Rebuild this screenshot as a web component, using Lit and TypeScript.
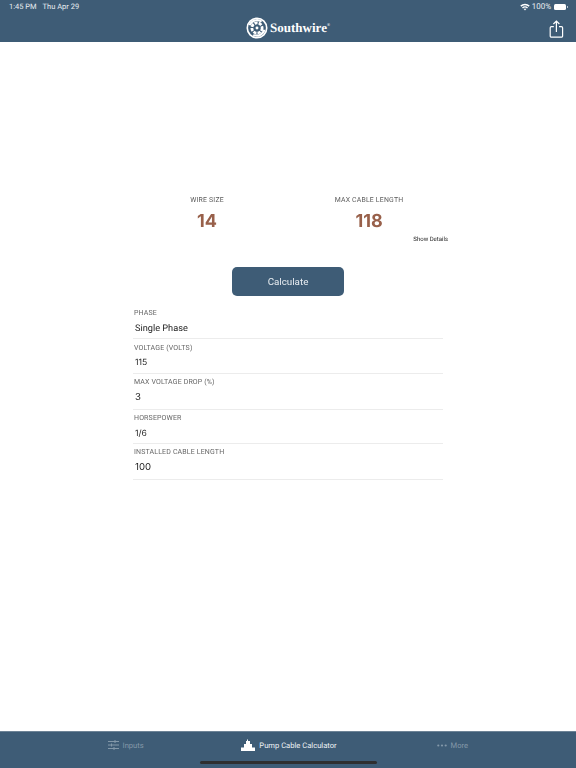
import { LitElement, html, css, svg } from "lit";
import { customElement } from "lit/decorators.js";
import { classMap } from "lit/directives/class-map.js";

const FIELDS = [
  { label: "PHASE", value: "Single Phase", h: 35, top: 4, gap: 4, kind: "text" },
  { label: "VOLTAGE (VOLTS)", value: "115", h: 35, top: 4, gap: 3, kind: "small" },
  { label: "MAX VOLTAGE DROP (%)", value: "3", h: 36, top: 3, gap: 4, kind: "big" },
  { label: "HORSEPOWER", value: "1/6", h: 34, top: 3, gap: 4, kind: "small" },
  { label: "INSTALLED CABLE LENGTH", value: "100", h: 36, top: 3, gap: 4, kind: "big" },
];

const logoMark = svg`<svg class="mark" width="22" height="22" viewBox="0 0 24 24" fill="none" stroke="#fff">
  <circle cx="12" cy="12" r="10.6" stroke-width="1.8"/>
  <path d="M4 9 A8.5 8.5 0 0 1 17 5 M20 14 A8.5 8.5 0 0 1 8 19.5" stroke-width="2.4"/>
  <circle cx="12" cy="12" r="5.6" stroke-width="3" stroke-dasharray="3.4 1.2"/>
  <circle cx="12" cy="12" r="1.6" fill="#fff" stroke="none"/>
</svg>`;

@customElement("app-root")
export class AppRoot extends LitElement {
  static styles = css`
    :host {
      display: flex;
      flex-direction: column;
      width: 576px;
      height: 768px;
      background: #fff;
      font-family: Roboto, "Liberation Sans", sans-serif;
      text-rendering: geometricPrecision;
      overflow: hidden;
    }
    .header {
      height: 42px;
      flex: none;
      background: #3e5c76;
      position: relative;
      color: #fff;
    }
    .status {
      display: flex;
      justify-content: space-between;
      align-items: center;
      height: 14px;
      padding: 0 9px;
      font-size: 8px;
      line-height: 14px;
      color: #e8edf1;
    }
    .status-left { display: flex; gap: 6px; font-size: 7.5px; }
    .status-right { display: flex; align-items: center; gap: 2px; }
    .battery {
      width: 12px;
      height: 6px;
      background: #fff;
      border-radius: 1.5px;
      margin-left: 1px;
      margin-right: 1px;
      position: relative;
    }
    .battery::after {
      content: "";
      position: absolute;
      right: -2px;
      top: 2px;
      width: 1px;
      height: 2px;
      background: #b9c5cf;
    }
    .bar {
      height: 28px;
      display: flex;
      align-items: center;
      justify-content: center;
      position: relative;
    }
    .logo {
      display: flex;
      align-items: center;
      gap: 2px;
    }
    .brand {
      font-family: "Liberation Serif", serif;
      font-weight: 700;
      font-size: 13px;
      color: #fff;
    }
    .brand sup { font-size: 4px; vertical-align: 6px; line-height: 0; }
    .share {
      position: absolute;
      right: 12px;
      top: 6px;
    }
    main {
      flex: 1;
      display: flex;
      flex-direction: column;
      align-items: center;
      padding-top: 153px;
      will-change: transform;
    }
    .results {
      width: 324px;
      display: grid;
      grid-template-columns: 1fr 1fr;
    }
    .result {
      display: flex;
      flex-direction: column;
      align-items: center;
    }
    .result-label {
      font-size: 6.9px;
      line-height: 11px;
      letter-spacing: 0.2px;
      color: #5c5c5c;
    }
    .result-value {
      font-family: Inter, sans-serif;
      font-size: 18px;
      line-height: 22px;
      font-weight: 700;
      color: #98604a;
      margin-top: 5px;
    }
    .details-row {
      width: 324px;
      display: flex;
      justify-content: flex-end;
      font-size: 6px;
      line-height: 10px;
      color: #222;
      margin-top: 2px;
      padding-right: 2px;
      box-sizing: border-box;
    }
    .calc {
      width: 112px;
      height: 29px;
      margin-top: 22px;
      border: none;
      border-radius: 5px;
      background: #3e5c76;
      color: #e9eef2;
      font: inherit;
      font-size: 9.8px;
      padding: 0;
    }
    .form {
      width: 310px;
      margin-top: 8px;
      display: flex;
      flex-direction: column;
    }
    .field {
      border-bottom: 1px solid #ececec;
      box-sizing: border-box;
    }
    .field-label {
      font-size: 7px;
      line-height: 10px;
      letter-spacing: 0.15px;
      color: #666;
      margin-left: 1px;
    }
    .field-value {
      font-size: 9.2px;
      line-height: 14px;
      margin-left: 2px;
      color: #1c1c1c;
    }
    .field-value.small { font-family: Inter, sans-serif; font-size: 8.6px; }
    .field-value.big { font-family: Inter, sans-serif; font-size: 9.6px; }
    .tabs {
      height: 37px;
      flex: none;
      background: #3e5c76;
      border-top: 1px solid #6d8396;
      box-sizing: border-box;
      position: relative;
      display: grid;
      grid-template-columns: 1fr 1fr 1fr;
      padding: 0 42px 10px 44px;
      align-items: center;
    }
    .tab {
      display: flex;
      align-items: center;
      justify-content: center;
      gap: 4px;
      font-size: 7.6px;
      color: #8398a9;
      white-space: nowrap;
    }
    .tab.active { color: #eef2f5; font-size: 7.6px; }
    .home {
      position: absolute;
      left: 200px;
      bottom: 4px;
      width: 177px;
      height: 3px;
      border-radius: 2px;
      background: #2f2f30;
    }
  `;

  render() {
    return html`
      <div class="header">
        <div class="status">
          <div class="status-left"><span>1:45 PM</span><span>Thu Apr 29</span></div>
          <div class="status-right">
            <svg width="10" height="8" viewBox="0 0 10 8">
              <path d="M0.3 2.6 A6.6 6.6 0 0 1 9.7 2.6 L8.7 3.7 A5.2 5.2 0 0 0 1.3 3.7Z" fill="#fff"/>
              <path d="M2 4.4 A4.2 4.2 0 0 1 8 4.4 L7 5.4 A2.8 2.8 0 0 0 3 5.4Z" fill="#fff"/>
              <path d="M3.7 6.1 A1.8 1.8 0 0 1 6.3 6.1 L5 7.6Z" fill="#fff"/>
            </svg>
            <span>100%</span>
            <div class="battery"></div>
          </div>
        </div>
        <div class="bar">
          <div class="logo">${logoMark}<span class="brand">Southwire<sup>®</sup></span></div>
          <svg class="share" width="15" height="19" viewBox="0 0 15 19" fill="none" stroke="#fff" stroke-width="1.2">
            <path d="M4.8 6.6 H2.4 A1.2 1.2 0 0 0 1.2 7.8 V16 A1.2 1.2 0 0 0 2.4 17.2 H12.4 A1.2 1.2 0 0 0 13.6 16 V7.8 A1.2 1.2 0 0 0 12.4 6.6 H10"/>
            <path d="M7.4 12 V1.4 M4.4 4 L7.4 1 L10.4 4"/>
          </svg>
        </div>
      </div>
      <main>
        <div class="results">
          <div class="result"><span class="result-label">WIRE SIZE</span><span class="result-value">14</span></div>
          <div class="result"><span class="result-label">MAX CABLE LENGTH</span><span class="result-value">118</span></div>
        </div>
        <div class="details-row"><span>Show Details</span></div>
        <button class="calc">Calculate</button>
        <div class="form">
          ${FIELDS.map(
            (f) => html`<div class="field" style="height:${f.h}px;padding-top:${f.top}px">
              <div class="field-label">${f.label}</div>
              <div class=${classMap({ "field-value": true, small: f.kind === "small", big: f.kind === "big" })} style="margin-top:${f.gap}px">${f.value}</div>
            </div>`
          )}
        </div>
      </main>
      <div class="tabs">
        <div class="tab">
          <svg width="11" height="10" viewBox="0 0 11 10" stroke="#8398a9" stroke-width="1" fill="none">
            <path d="M0 1.5H11M0 5H11M0 8.5H11"/>
            <path d="M7 0V3M3.5 3.5V6.5M6 7V10"/>
          </svg>
          <span>Inputs</span>
        </div>
        <div class="tab active">
          <svg width="14" height="12" viewBox="0 0 14 12" fill="#fff">
            <path d="M0 8.5H3V5H5V2H6V0.5H7V2H9V5H11V8.5H14V12H0Z"/>
          </svg>
          <span>Pump Cable Calculator</span>
        </div>
        <div class="tab">
          <svg width="10" height="3" viewBox="0 0 10 3" fill="#8398a9">
            <circle cx="1.3" cy="1.5" r="1.1"/><circle cx="5" cy="1.5" r="1.1"/><circle cx="8.7" cy="1.5" r="1.1"/>
          </svg>
          <span>More</span>
        </div>
        <div class="home"></div>
      </div>
    `;
  }
}
